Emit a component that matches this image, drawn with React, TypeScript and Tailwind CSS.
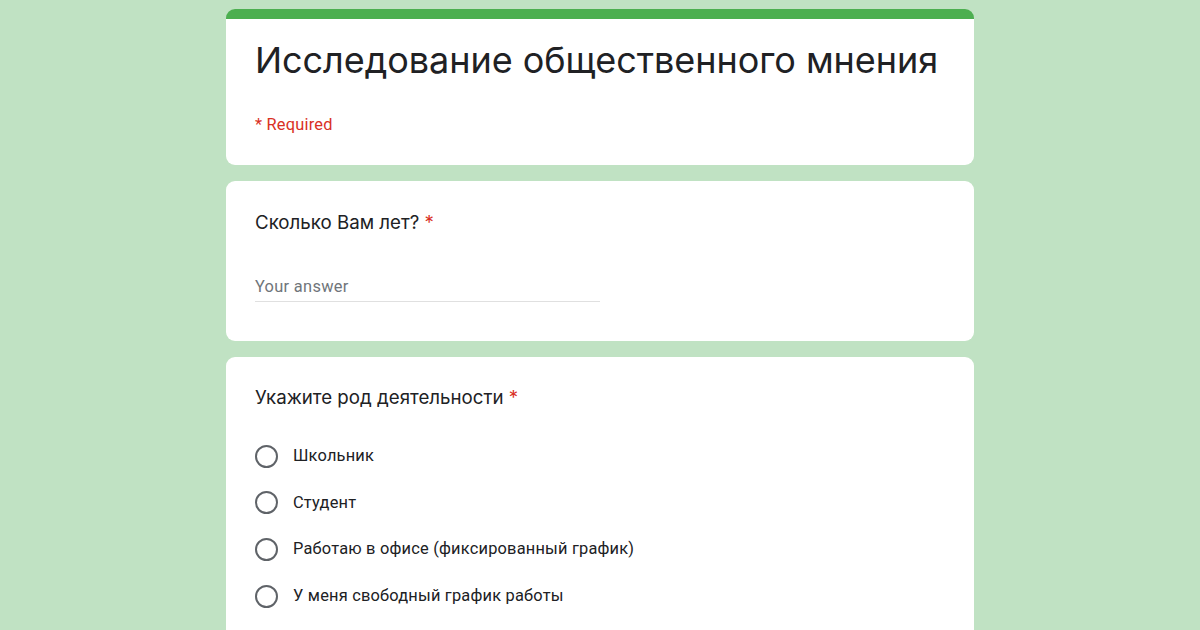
const options = [
  "Школьник",
  "Студент",
  "Работаю в офисе (фиксированный график)",
  "У меня свободный график работы",
];

function Radio() {
  return <div className="w-[23px] h-[23px] rounded-full border-[2.3px] border-[#5f6368] shrink-0" />;
}

export default function App() {
  return (
    <div className="w-[1200px] h-[630px] overflow-hidden bg-[#c0e2c3] font-['Roboto',sans-serif]">
      <div className="w-[748px] mx-auto pt-[9px] flex flex-col gap-4">
        <div className="bg-white rounded-[9px] border-t-[10px] border-[#4caf50] px-[29px] pt-[19px] pb-[30px]">
          <h1 className="text-[36px] leading-[44px] text-[#202124] font-['Inter',sans-serif] tracking-[-0.05px]">
            Исследование общественного мнения
          </h1>
          <div className="mt-[33px] text-[16.4px] leading-5 text-[#d93025] tracking-[0.2px]">* Required</div>
        </div>

        <div className="bg-white rounded-[9px] px-[29px] pt-[29px] pb-[39px]">
          <div className="text-[18.7px] leading-[26px] text-[#202124] font-['Inter',sans-serif]">
            Сколько Вам лет? <span className="text-[#d93025]">*</span>
          </div>
          <div className="mt-[41px] w-[345px] border-b border-[#e0e0e0] pb-1 text-[16.4px] leading-5 text-[#70757a] tracking-[0.3px]">
            Your answer
          </div>
        </div>

        <div className="bg-white rounded-[9px] px-[29px] pt-[28px] pb-12">
          <div className="text-[18.7px] leading-[26px] text-[#202124] font-['Inter',sans-serif]">
            Укажите род деятельности <span className="text-[#d93025]">*</span>
          </div>
          <div className="mt-[33px] flex flex-col gap-[22.7px]">
            {options.map((o) => (
              <div key={o} className="h-6 flex items-center gap-[15px]">
                <Radio />
                <span className="text-[16.4px] leading-5 text-[#202124] tracking-[0.2px]">{o}</span>
              </div>
            ))}
          </div>
        </div>
      </div>
    </div>
  );
}
